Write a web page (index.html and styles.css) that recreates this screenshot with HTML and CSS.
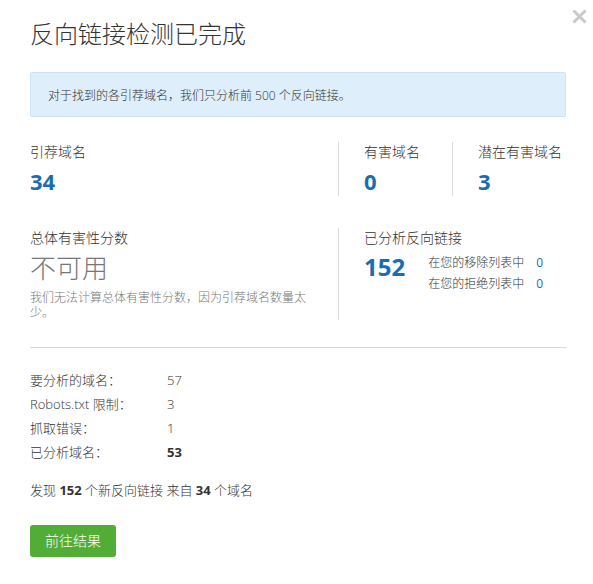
FILE: index.html
```html
<!DOCTYPE html>
<html lang="zh-CN">
<head>
<meta charset="utf-8">
<title>反向链接检测已完成</title>
<link rel="stylesheet" href="styles.css">
</head>
<body>
<div class="modal">
  <button class="close" aria-label="关闭">
    <svg width="15" height="15" viewBox="0 0 15 15"><path d="M1.5 1.5 L13.5 13.5 M13.5 1.5 L1.5 13.5" stroke="#c9c9c9" stroke-width="3" stroke-linecap="butt"/></svg>
  </button>
  <h1 class="title">反向链接检测已完成</h1>
  <div class="notice">对于找到的各引荐域名，我们只分析前 500 个反向链接。</div>

  <div class="stats">
    <div class="cell">
      <div class="label">引荐域名</div>
      <div class="num">34</div>
    </div>
    <div class="cell divided">
      <div class="label">有害域名</div>
      <div class="num">0</div>
    </div>
    <div class="cell divided">
      <div class="label">潜在有害域名</div>
      <div class="num">3</div>
    </div>

    <div class="cell score">
      <div class="label">总体有害性分数</div>
      <div class="na">不可用</div>
      <div class="desc">我们无法计算总体有害性分数，因为引荐域名数量太少。</div>
    </div>
    <div class="cell divided wide">
      <div class="label">已分析反向链接</div>
      <div class="links">
        <div class="num big">152</div>
        <div class="sublist">
          <div class="subrow"><span class="sublabel">在您的移除列表中</span><span class="subval">0</span></div>
          <div class="subrow"><span class="sublabel">在您的拒绝列表中</span><span class="subval">0</span></div>
        </div>
      </div>
    </div>
  </div>

  <hr class="sep">

  <div class="facts">
    <div class="fact"><span class="fk">要分析的域名：</span><span class="fv">57</span></div>
    <div class="fact"><span class="fk">Robots.txt 限制：</span><span class="fv">3</span></div>
    <div class="fact"><span class="fk">抓取错误：</span><span class="fv">1</span></div>
    <div class="fact"><span class="fk">已分析域名：</span><span class="fv strong">53</span></div>
  </div>

  <p class="summary">发现 <b>152</b> 个新反向链接 来自 <b>34</b> 个域名</p>

  <button class="go">前往结果</button>
</div>
</body>
</html>
```
FILE: styles.css
```css
html, body {
  margin: 0;
  padding: 0;
  background: #ffffff;
}
body {
  font-family: "Open Sans", "Noto Sans CJK SC", sans-serif;
  font-weight: 300;
  color: #333333;
}
.modal {
  position: relative;
  padding: 18px 27px 0 30px;
}
.close {
  position: absolute;
  top: 9px;
  right: 6px;
  width: 15px;
  height: 15px;
  padding: 0;
  border: 0;
  background: none;
  display: block;
}
.close svg { display: block; }
.title {
  margin: 0;
  font-size: 24px;
  line-height: 32px;
  font-weight: 300;
  color: #333333;
}
.notice {
  margin-top: 22px;
  height: 43px;
  border: 1px solid #cde3f5;
  background: #deeefb;
  border-radius: 2px;
  padding: 0 17px;
  font-size: 12px;
  line-height: 45px;
  color: #333333;
}
.stats {
  margin-top: 25px;
  display: grid;
  grid-template-columns: 308px 114px 114px;
  row-gap: 32px;
}
.cell.divided {
  border-left: 1px solid #dcdcdc;
  padding-left: 25px;
}
.cell.wide {
  grid-column: span 2;
}
.label {
  font-size: 14px;
  line-height: 20px;
  color: #333333;
}
.num {
  margin-top: 4px;
  font-size: 22px;
  line-height: 30px;
  font-weight: 700;
  color: #1b6cb1;
}
.score {
  padding-right: 28px;
}
.na {
  margin-top: 4px;
  font-size: 26px;
  line-height: 32px;
  color: #777777;
}
.desc {
  margin-top: 6px;
  font-size: 12px;
  line-height: 15px;
  color: #777777;
}
.links {
  display: flex;
  align-items: flex-start;
  gap: 23px;
  margin-top: 4px;
}
.num.big {
  margin-top: 0;
  font-size: 24px;
  line-height: 30px;
}
.sublist {
  display: flex;
  flex-direction: column;
}
.subrow {
  display: flex;
  gap: 12px;
  font-size: 12px;
  line-height: 21px;
}
.sublabel { color: #333333; }
.subval { color: #1b6cb1; font-weight: 400; }
.sep {
  margin: 27px 0 0 0;
  border: 0;
  border-top: 1px solid #d9d9d9;
  height: 0;
}
.facts {
  margin-top: 20px;
  font-size: 13px;
  line-height: 24px;
}
.fact {
  display: flex;
}
.fk {
  width: 137px;
  color: #333333;
}
.fv { color: #333333; }
.fv.strong { font-weight: 700; }
.summary {
  margin: 16px 0 0 0;
  font-size: 13px;
  line-height: 20px;
}
.summary b { font-weight: 700; }
.go {
  margin-top: 25px;
  display: block;
  height: 32px;
  padding: 0 15px;
  border: 0;
  border-radius: 3px;
  background: #52ad37;
  color: #ffffff;
  font-family: "Open Sans", "Noto Sans CJK SC", sans-serif;
  font-weight: 300;
  font-size: 14px;
  line-height: 32px;
}
```
